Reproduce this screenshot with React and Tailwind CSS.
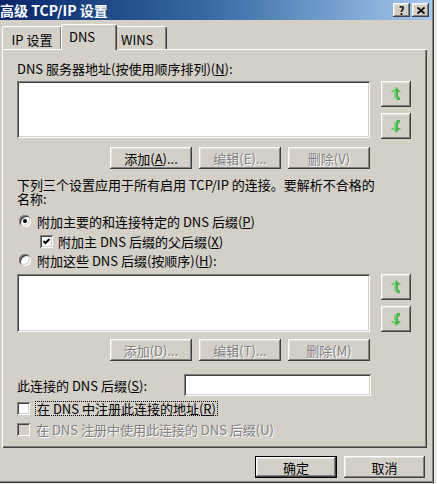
import React from "react";

const raised =
  "bg-[#d4d0c8] shadow-[inset_-1px_-1px_0_#404040,inset_1px_1px_0_#ffffff,inset_-2px_-2px_0_#808080,inset_2px_2px_0_#e4e2dd]";
const sunken =
  "shadow-[inset_1px_1px_0_#808080,inset_-1px_-1px_0_#ffffff,inset_2px_2px_0_#404040,inset_-2px_-2px_0_#d4d0c8]";
const grayText = "text-[#808080] [text-shadow:1px_1px_0_#ffffff]";

function U({ children }) {
  return <span className="underline underline-offset-[1px]">{children}</span>;
}

function Btn({ children, disabled }) {
  return (
    <div
      className={`${raised} w-[82px] h-[22px] flex items-center justify-center ${
        disabled ? grayText : "text-black"
      }`}
    >
      {children}
    </div>
  );
}

function Arrow({ down }) {
  return (
    <svg width="10" height="14" viewBox="0 0 10 14">
      <g transform={down ? "matrix(1 0 0 -1 0 14)" : undefined}>
        <path
          d="M5 0 L10 5 L7 5 L7 9 L9 11 L9 13 L6 13 L3 10 L3 5 L0 5 Z"
          fill="#46b84a"
        />
        <path d="M5 1 L2 4 L4 4 L4 10 L6 12" stroke="#a6eca6" strokeWidth="1" fill="none" />
      </g>
    </svg>
  );
}

function MoveButtons() {
  return (
    <div className="flex flex-col gap-[6px] ml-[11px]">
      <div className={`${raised} w-[30px] h-[26px] flex items-center justify-center`}>
        <Arrow />
      </div>
      <div className={`${raised} w-[30px] h-[26px] flex items-center justify-center`}>
        <Arrow down />
      </div>
    </div>
  );
}

function Radio({ checked }) {
  return (
    <div
      className={`w-[12px] h-[12px] rounded-full bg-white flex items-center justify-center shrink-0 ${sunken}`}
    >
      {checked && <div className="w-[4px] h-[4px] rounded-full bg-black" />}
    </div>
  );
}

function Check({ checked, disabled }) {
  return (
    <div
      className={`w-[13px] h-[13px] flex items-center justify-center shrink-0 ${
        disabled ? "bg-[#d4d0c8]" : "bg-white"
      } ${sunken}`}
    >
      {checked && (
        <svg width="9" height="9" viewBox="0 0 9 9">
          <path d="M1.5 4 L3.5 6 L7.5 2" stroke="#000" strokeWidth="2" fill="none" />
        </svg>
      )}
    </div>
  );
}

export default function App() {
  return (
    <div className="w-[437px] h-[484px] bg-[#ecebe8] overflow-hidden text-[13px] leading-[13px] text-black font-['SimSun','Noto_Sans_CJK_SC',sans-serif]">
      <div className="w-[434px] h-[483px] bg-[#d4d0c8] flex flex-col shadow-[inset_-1px_-1px_0_#404040,inset_-2px_-2px_0_#808080]">
        {/* title bar */}
        <div className="h-[20px] mr-[2px] flex items-center justify-between bg-gradient-to-r from-[#0a246a] via-[#3a6ea5] to-[#a6caf0]">
          <span className="text-white font-bold text-[14px] leading-[14px]">高级 TCP/IP 设置</span>
          <div className="flex gap-[2px] mr-[3px]">
            <div className={`${raised} w-[17px] h-[14px] flex items-center justify-center font-bold text-[11px] leading-none`}>
              ?
            </div>
            <div className={`${raised} w-[17px] h-[14px] flex items-center justify-center`}>
              <svg width="8" height="7" viewBox="0 0 8 7">
                <path d="M0.5 0.5 L7.5 6.5 M7.5 0.5 L0.5 6.5" stroke="#000" strokeWidth="1.8" />
              </svg>
            </div>
          </div>
        </div>

        {/* tabs */}
        <div className="flex items-end h-[25px] mt-[4px] pl-[2px]">
          <div className="h-[23px] w-[59px] flex items-center justify-center pt-[2px] border-t border-l border-white rounded-tl-[3px] shadow-[inset_-1px_0_0_#808080]">
            IP 设置
          </div>
          <div className="relative z-10 h-[26px] -mb-[1px] w-[56px] flex items-center pl-[7px] pb-[2px] bg-[#d4d0c8] border-t border-l border-white border-r border-r-[#404040] rounded-t-[3px] shadow-[inset_-1px_0_0_#808080]">
            DNS
          </div>
          <div className="h-[23px] w-[50px] flex items-center pl-[4px] pt-[2px] border-t border-white border-r border-r-[#404040] rounded-tr-[3px] shadow-[inset_-1px_0_0_#808080]">
            WINS
          </div>
        </div>

        {/* panel */}
        <div className="ml-[2px] w-[425px] h-[399px] px-[15px] flex flex-col shadow-[inset_1px_1px_0_#ffffff,inset_-1px_-1px_0_#404040,inset_-2px_-2px_0_#808080]">
          <div className="mt-[13px] h-[13px] whitespace-nowrap">
            DNS 服务器地址(按使用顺序排列)(<U>N</U>):
          </div>
          <div className="mt-[6px] flex">
            <div className={`w-[353px] h-[57px] bg-white ${sunken}`} />
            <MoveButtons />
          </div>
          <div className="mt-[8px] ml-[93px] flex gap-[7px]">
            <Btn>
              添加(<U>A</U>)...
            </Btn>
            <Btn disabled>编辑(E)...</Btn>
            <Btn disabled>删除(V)</Btn>
          </div>

          <div className="mt-[9px] flex flex-col">
            <div className="h-[14px] leading-[14px] whitespace-nowrap">
              下列三个设置应用于所有启用 TCP/IP 的连接。要解析不合格的
            </div>
            <div className="h-[14px] leading-[14px]">名称:</div>
          </div>

          <div className="mt-[8px] h-[14px] pl-[2px] flex items-center gap-[6px]">
            <Radio checked />
            <span>
              附加主要的和连接特定的 DNS 后缀(<U>P</U>)
            </span>
          </div>
          <div className="mt-[6px] h-[14px] pl-[23px] flex items-center gap-[5px]">
            <Check checked />
            <span>
              附加主 DNS 后缀的父后缀(<U>X</U>)
            </span>
          </div>
          <div className="mt-[5px] h-[14px] pl-[2px] flex items-center gap-[6px]">
            <Radio />
            <span>
              附加这些 DNS 后缀(按顺序)(<U>H</U>):
            </span>
          </div>

          <div className="mt-[7px] flex">
            <div className={`w-[353px] h-[58px] bg-white ${sunken}`} />
            <MoveButtons />
          </div>
          <div className="mt-[7px] ml-[93px] flex gap-[7px]">
            <Btn disabled>添加(D)...</Btn>
            <Btn disabled>编辑(T)...</Btn>
            <Btn disabled>删除(M)</Btn>
          </div>

          <div className="mt-[13px] flex items-center">
            <span className="w-[167px]">
              此连接的 DNS 后缀(<U>S</U>):
            </span>
            <div className={`w-[187px] h-[22px] bg-white ${sunken}`} />
          </div>

          <div className="mt-[5px] h-[14px] flex items-center gap-[5px]">
            <Check />
            <span className="border border-dotted border-black px-[1px] leading-[13px]">
              在 DNS 中注册此连接的地址(<U>R</U>)
            </span>
          </div>
          <div className="mt-[7px] h-[14px] flex items-center gap-[6px]">
            <Check disabled />
            <span className={grayText}>在 DNS 注册中使用此连接的 DNS 后缀(U)</span>
          </div>
        </div>

        {/* footer */}
        <div className="mt-[8px] flex justify-end gap-[7px] pr-[9px]">
          <div className="w-[82px] h-[22px] border border-black">
            <div className={`${raised} w-full h-full flex items-center justify-center`}>确定</div>
          </div>
          <div className={`${raised} w-[81px] h-[22px] flex items-center justify-center`}>取消</div>
        </div>
      </div>
    </div>
  );
}
